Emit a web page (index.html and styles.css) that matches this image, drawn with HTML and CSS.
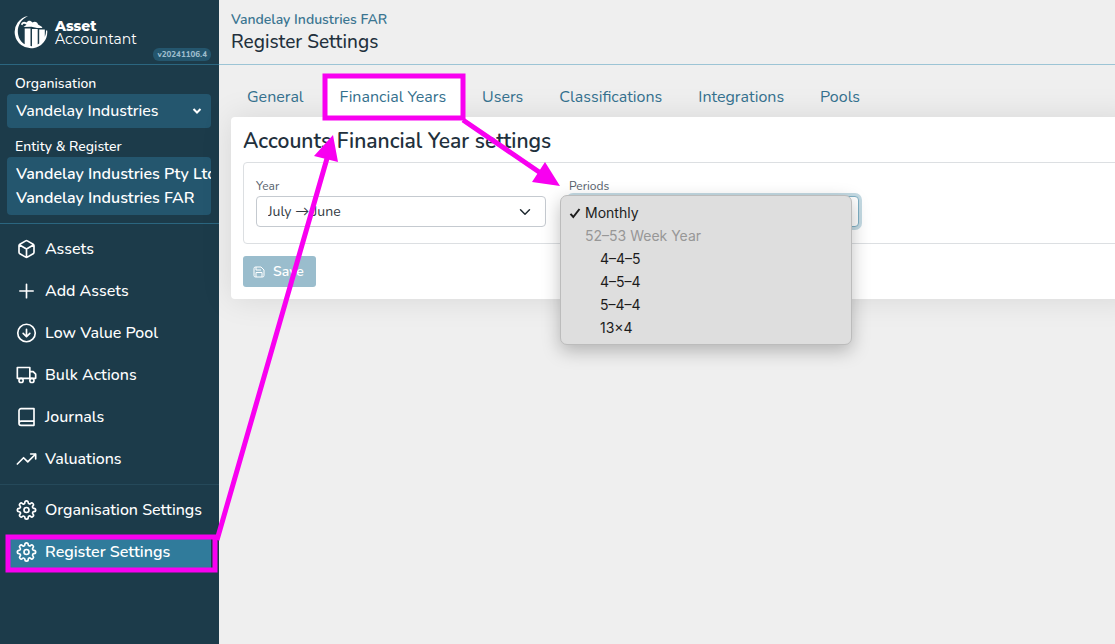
FILE: index.html
```html
<!DOCTYPE html>
<html lang="en">
<head>
<meta charset="utf-8">
<title>Register Settings</title>
<link rel="stylesheet" href="styles.css">
</head>
<body>
<div class="app">
  <aside class="sidebar">
    <div class="brand">
      <svg class="brand-mark" viewBox="0 0 34 34" aria-hidden="true">
        <path d="M14 1A16.300 16.300 0 1 0 33.200 15.500L32 15.500A14.500 14.500 0 0 1 30.800 22V14.500H25.200V28.500L23.700 29.500V14H18V31.200L16.500 31V13.500H10.700V29.200C1.500 24 .5 7.500 14 1z" fill="#fff"/>
        <path d="M7 9.500C7.500 6.500 10.500 6 12.500 7.500 14.500 5 16.500 5.500 18.500 7.500 21 6 23.500 7 24 9.500L27.500 11.500 28.500 13H23L17.500 11.800 9.500 12 12.500 9.800C10.500 8.300 9 8.500 8.500 10.200z" fill="#fff"/>
      </svg>
      <div class="brand-name"><strong>Asset</strong><span>Accountant</span></div>
      <span class="version">v20241106.4</span>
    </div>
    <div class="context">
      <span class="context-label" id="org-label">Organisation</span>
      <button class="context-box context-org" type="button" aria-describedby="org-label">
        <span>Vandelay Industries</span>
        <svg class="caret" viewBox="0 0 10 10" aria-hidden="true"><path d="M1.500 3 5 6.500 8.500 3"/></svg>
      </button>
      <span class="context-label" id="entity-label">Entity &amp; Register</span>
      <button class="context-box context-entity" type="button" aria-describedby="entity-label"><span>Vandelay Industries Pty Ltd</span><span>Vandelay Industries FAR</span></button>
    </div>
    <nav class="nav">
      <a class="nav-item" href="#"><svg class="icon" viewBox="0 0 24 24"><path d="M21 16V8a2 2 0 0 0-1-1.730l-7-4a2 2 0 0 0-2 0l-7 4A2 2 0 0 0 3 8v8a2 2 0 0 0 1 1.730l7 4a2 2 0 0 0 2 0l7-4A2 2 0 0 0 21 16zM3.300 7 12 12l8.700-5M12 22V12"/></svg>Assets</a>
      <a class="nav-item" href="#"><svg class="icon" viewBox="0 0 24 24"><path d="M12 4v16M4 12h16"/></svg>Add Assets</a>
      <a class="nav-item" href="#"><svg class="icon" viewBox="0 0 24 24"><circle cx="12" cy="12" r="10.500"/><path d="M12 7.500v9M8 12.500l4 4 4-4"/></svg>Low Value Pool</a>
      <a class="nav-item" href="#"><svg class="icon" viewBox="0 0 24 24"><path d="M1 3h15v13H1zM16 8h4l3 3v5h-7z"/><circle cx="5.500" cy="18.500" r="2.500"/><circle cx="18.500" cy="18.500" r="2.500"/></svg>Bulk Actions</a>
      <a class="nav-item" href="#"><svg class="icon" viewBox="0 0 24 24"><path d="M3 19.500V4.500A2.500 2.500 0 0 1 5.500 2H21v20H5.500A2.500 2.500 0 0 1 3 19.500 2.500 2.500 0 0 1 5.500 17H21"/></svg>Journals</a>
      <a class="nav-item" href="#"><svg class="icon" viewBox="0 0 24 24"><path d="M23 6l-9.500 9.500-5-5L1 18M17 6h6v6"/></svg>Valuations</a>
    </nav>
    <nav class="nav nav-settings">
      <a class="nav-item" href="#"><svg class="icon" viewBox="0 0 24 24"><use href="#gear"/></svg>Organisation Settings</a>
      <a class="nav-item active" href="#" aria-current="page"><svg class="icon" viewBox="0 0 24 24"><use href="#gear"/></svg>Register Settings</a>
    </nav>
  </aside>

  <main class="main">
    <header class="page-head">
      <a class="crumb" href="#">Vandelay Industries FAR</a>
      <h1 class="page-title">Register Settings</h1>
    </header>
    <div class="content">
      <nav class="tabs">
        <a class="tab" href="#">General</a>
        <a class="tab current" href="#" aria-current="page">Financial Years</a>
        <a class="tab" href="#">Users</a>
        <a class="tab" href="#">Classifications</a>
        <a class="tab" href="#">Integrations</a>
        <a class="tab" href="#">Pools</a>
      </nav>
      <form class="card">
        <h2 class="card-title">Accounts Financial Year settings</h2>
        <div class="fields">
          <div class="field">
            <label for="year">Year</label>
            <select id="year" class="select"><option>July → June</option></select>
          </div>
          <div class="field">
            <label for="periods">Periods</label>
            <select id="periods" class="select focused"><option>Monthly</option></select>
            <ul class="menu" role="listbox" aria-label="Periods">
              <li class="option" role="option" aria-selected="true"><svg class="tick" viewBox="0 0 12 12" aria-hidden="true"><path d="M1.500 6.800 4.300 10 10.500 2"/></svg>Monthly</li>
              <li class="option group">52–53 Week Year</li>
              <li class="option child" role="option">4–4–5</li>
              <li class="option child" role="option">4–5–4</li>
              <li class="option child" role="option">5–4–4</li>
              <li class="option child" role="option">13×4</li>
            </ul>
          </div>
        </div>
        <button class="save" type="button"><svg class="save-icon" viewBox="0 0 24 24" aria-hidden="true"><path d="M19 22H5a3 3 0 0 1-3-3V5a3 3 0 0 1 3-3h11l6 6v11a3 3 0 0 1-3 3zM18 22v-9H6v9M6 2v6h10"/></svg>Save</button>
      </form>
    </div>
  </main>
</div>

<svg class="annotations" aria-hidden="true">
  <rect x="8" y="537" width="207" height="33"/>
  <rect x="325" y="76" width="138" height="42"/>
  <path d="M217 540 328 155M463 120 542 174"/>
  <path class="head" d="M333 135 338 162 314 156zM560 186 532 182 545 162z"/>
</svg>

<svg class="defs" aria-hidden="true">
  <symbol id="gear" viewBox="0 0 24 24" overflow="visible">
    <circle cx="12" cy="12" r="3"/>
    <path d="M19.400 15a1.650 1.650 0 0 0 .33 1.820l.06.06a2 2 0 0 1-2.830 2.830l-.06-.06a1.650 1.650 0 0 0-1.820-.33 1.650 1.650 0 0 0-1 1.510V21a2 2 0 0 1-4 0v-.09A1.650 1.650 0 0 0 9 19.400a1.650 1.650 0 0 0-1.820.33l-.06.06a2 2 0 0 1-2.830-2.830l.06-.06a1.650 1.650 0 0 0 .33-1.820 1.650 1.650 0 0 0-1.510-1H3a2 2 0 0 1 0-4h.09A1.650 1.650 0 0 0 4.600 9a1.650 1.650 0 0 0-.33-1.820l-.06-.06a2 2 0 0 1 2.830-2.830l.06.06a1.650 1.650 0 0 0 1.820.33H9a1.650 1.650 0 0 0 1-1.510V3a2 2 0 0 1 4 0v.09a1.650 1.650 0 0 0 1 1.510 1.650 1.650 0 0 0 1.820-.33l.06-.06a2 2 0 0 1 2.830 2.830l-.06.06a1.650 1.650 0 0 0-.33 1.820V9a1.650 1.650 0 0 0 1.510 1H21a2 2 0 0 1 0 4h-.09a1.650 1.650 0 0 0-1.510 1z"/>
  </symbol>
</svg>
</body>
</html>
```
FILE: styles.css
```css
* { box-sizing: border-box; }

body {
  margin: 0;
  overflow: hidden;
  background: #efefef;
  color: #22303c;
  font-family: Nunito, Lato, sans-serif;
  font-size: 16px;
  line-height: 24px;
}

a { text-decoration: none; }
button, select { font: inherit; }

.app { display: flex; min-height: 100vh; }

/* Sidebar */
.sidebar {
  flex: none;
  width: 219px;
  background: #1c3b4a;
  color: #fff;
}

.brand {
  position: relative;
  display: flex;
  align-items: center;
  gap: 7px;
  height: 65px;
  padding: 0 14px;
  border-bottom: 1px solid #2b6680;
}
.brand-mark { width: 34px; height: 34px; }
.brand-name {
  display: flex;
  flex-direction: column;
  padding-top: 2px;
  font-family: Montserrat, Lato, sans-serif;
  font-size: 14px;
  line-height: 13px;
}
.brand-name strong { font-weight: 800; }
.version {
  position: absolute;
  right: 8px;
  bottom: 3px;
  padding: 0 4px;
  border-radius: 6px;
  background: #24566e;
  color: #9dbccb;
  font-size: 8px;
  font-weight: 800;
  line-height: 13px;
}

.context {
  display: flex;
  flex-direction: column;
  padding: 8px 8px 8px 7px;
  border-bottom: 1px solid #2b6680;
}
.context-label {
  padding: 0 8px;
  font-size: 14px;
  font-weight: 500;
  line-height: 21px;
}
.context-box {
  display: flex;
  overflow: hidden;
  border: 0;
  border-radius: 4px;
  background: #24566e;
  color: #fff;
  font-weight: 500;
  text-align: left;
  white-space: nowrap;
}
.context-org {
  align-items: center;
  justify-content: space-between;
  height: 34px;
  margin-bottom: 8px;
  padding: 0 9px;
}
.context-entity {
  flex-direction: column;
  padding: 5px 0 5px 9px;
  font-weight: 600;
}
.caret {
  width: 10px;
  height: 10px;
  fill: none;
  stroke: #fff;
  stroke-width: 2;
}

.nav {
  display: flex;
  flex-direction: column;
  gap: 8px;
  padding: 8px;
}
.nav-settings { border-top: 1px solid #25495a; }
.nav-item {
  display: flex;
  align-items: center;
  gap: 8px;
  height: 34px;
  padding: 0 8px;
  color: #fff;
  font-weight: 500;
  white-space: nowrap;
}
.nav-item.active { background: #307b9b; font-weight: 600; }
.icon {
  width: 21px;
  height: 20px;
  overflow: visible;
  fill: none;
  stroke: currentColor;
  stroke-width: 2;
  stroke-linecap: round;
  stroke-linejoin: round;
}

/* Main */
.main { flex: 1; min-width: 0; }
.page-head {
  height: 65px;
  padding: 9px 12px;
  border-bottom: 1px solid #9cc4d5;
}
.crumb {
  display: block;
  color: #3b7591;
  font-size: 14px;
  font-weight: 600;
  line-height: 22px;
}
.page-title {
  margin: 0;
  font-size: 19px;
  font-weight: 500;
  line-height: 22px;
}

.content { padding: 12px 0 0 12px; }
.tabs { display: flex; gap: 4px; }
.tab {
  padding: 8px 16px;
  border-radius: 4px 4px 0 0;
  color: #34708d;
  font-weight: 400;
}
.tab.current { background: #fff; }

.card {
  margin-right: -24px;
  padding: 12px;
  border-radius: 4px;
  background: #fff;
  box-shadow: 0 0 32px rgba(0, 0, 0, 0.1);
}
.card-title {
  margin: 0 0 9px;
  font-size: 21px;
  font-weight: 600;
  line-height: 24px;
}
.fields {
  display: grid;
  grid-template-columns: repeat(3, 290px);
  gap: 23px;
  padding: 13px 12px 16px;
  border: 1px solid #dcdfe2;
  border-radius: 4px;
}
.field {
  position: relative;
  display: flex;
  flex-direction: column;
}
.field label {
  color: #55606b;
  font-size: 12px;
  line-height: 20px;
}
.select {
  height: 31px;
  padding: 0 11px;
  border: 1px solid #c5cad0;
  border-radius: 4px;
  appearance: none;
  background: #fff url("data:image/svg+xml,%3Csvg xmlns='http://www.w3.org/2000/svg' viewBox='0 0 16 16'%3E%3Cpath d='M2 5 8 11 14 5' fill='none' stroke='%23222c33' stroke-width='2' stroke-linecap='round' stroke-linejoin='round'/%3E%3C/svg%3E") no-repeat right 14px center / 12px;
  color: #333b44;
  font-size: 14px;
}
.select.focused {
  border-color: #7fb0c5;
  box-shadow: 0 0 0 3px #c4dae3;
}

.menu {
  position: absolute;
  top: 19px;
  left: -9px;
  width: 292px;
  margin: 0;
  padding: 5px 0;
  border: 1px solid #bcbcbc;
  border-radius: 7px;
  background: #dedede;
  box-shadow: 0 6px 18px rgba(0, 0, 0, 0.25);
  color: #1c1c1c;
  font-family: Inter, sans-serif;
  font-size: 14px;
  line-height: 23px;
  list-style: none;
}
.option {
  display: flex;
  align-items: center;
  gap: 4px;
  padding-left: 8px;
}
.option.group { padding-left: 24px; color: #979797; }
.option.child { padding-left: 39px; }
.tick {
  width: 12px;
  height: 12px;
  fill: none;
  stroke: currentColor;
  stroke-width: 2;
}

.save {
  display: flex;
  align-items: center;
  gap: 8px;
  height: 31px;
  margin-top: 12px;
  padding: 0 12px 0 10px;
  border: 0;
  border-radius: 3px;
  background: #9abdcd;
  color: #fff;
  font-size: 14px;
  font-weight: 600;
}
.save-icon {
  width: 12px;
  height: 12px;
  overflow: visible;
  fill: none;
  stroke: currentColor;
  stroke-width: 2;
}

/* Callouts drawn over the page */
.annotations {
  position: absolute;
  top: 0;
  left: 0;
  width: 100%;
  height: 100%;
  fill: none;
  stroke: #f800f0;
  stroke-width: 5;
  pointer-events: none;
}
.annotations .head { fill: #f800f0; stroke: none; }
.defs { position: absolute; width: 0; height: 0; }
```
